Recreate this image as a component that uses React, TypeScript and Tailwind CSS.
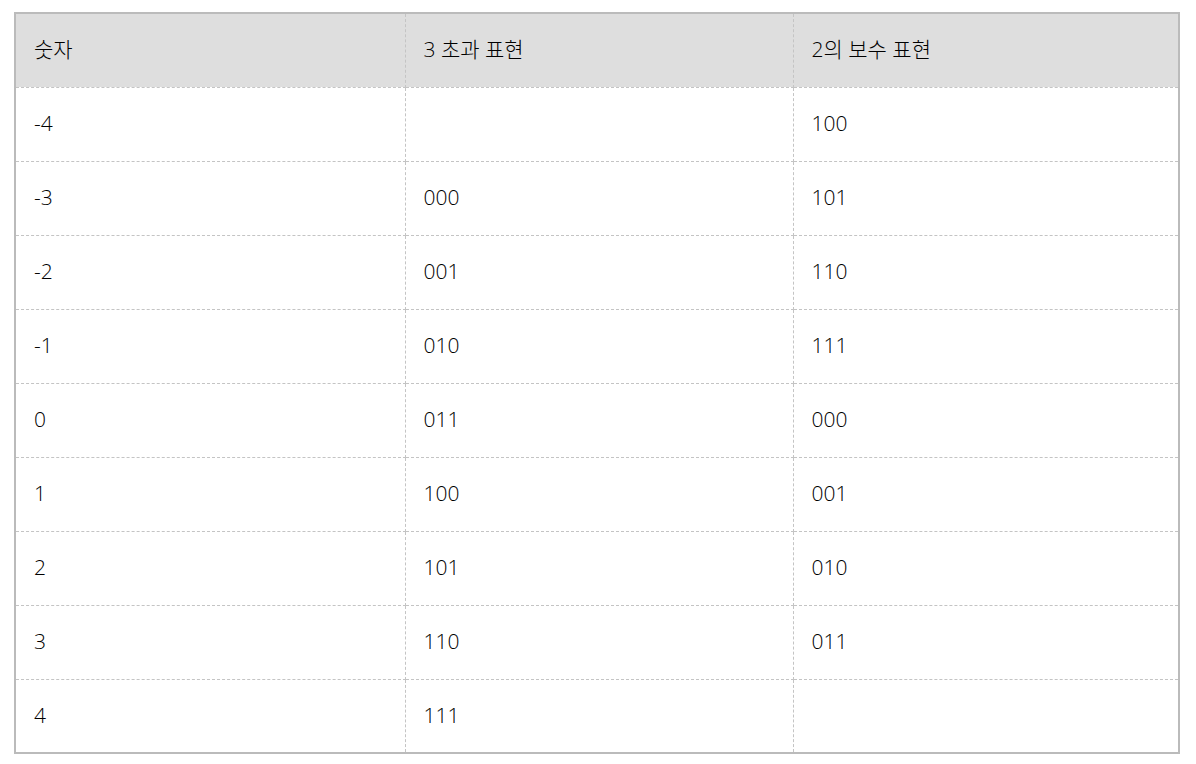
import React from "react";

const rows: [string, string, string][] = [
  ["-4", "", "100"],
  ["-3", "000", "101"],
  ["-2", "001", "110"],
  ["-1", "010", "111"],
  ["0", "011", "000"],
  ["1", "100", "001"],
  ["2", "101", "010"],
  ["3", "110", "011"],
  ["4", "111", ""],
];

const cell =
  "border border-dashed border-[#c4c4c4] pl-[18px] pr-[12px] pb-[1px] text-left align-middle font-light";

const App: React.FC = () => {
  return (
    <div
      className="bg-white min-h-screen pt-[12px] pl-[14px] text-black text-[21px]"
      style={{ fontFamily: '"Open Sans", "Noto Sans CJK KR", sans-serif' }}
    >
      <table className="w-[1166px] table-fixed border-collapse border-2 border-[#bbbbbb]">
        <colgroup>
          <col className="w-[390px]" />
          <col className="w-[388px]" />
          <col />
        </colgroup>
        <thead>
          <tr className="h-[74px] bg-[#dedede]">
            <th className={cell}>숫자</th>
            <th className={cell}>3 초과 표현</th>
            <th className={cell}>2의 보수 표현</th>
          </tr>
        </thead>
        <tbody>
          {rows.map((r, i) => (
            <tr key={i} className="h-[74px]">
              {r.map((v, j) => (
                <td key={j} className={cell}>
                  {v}
                </td>
              ))}
            </tr>
          ))}
        </tbody>
      </table>
    </div>
  );
};

export default App;
